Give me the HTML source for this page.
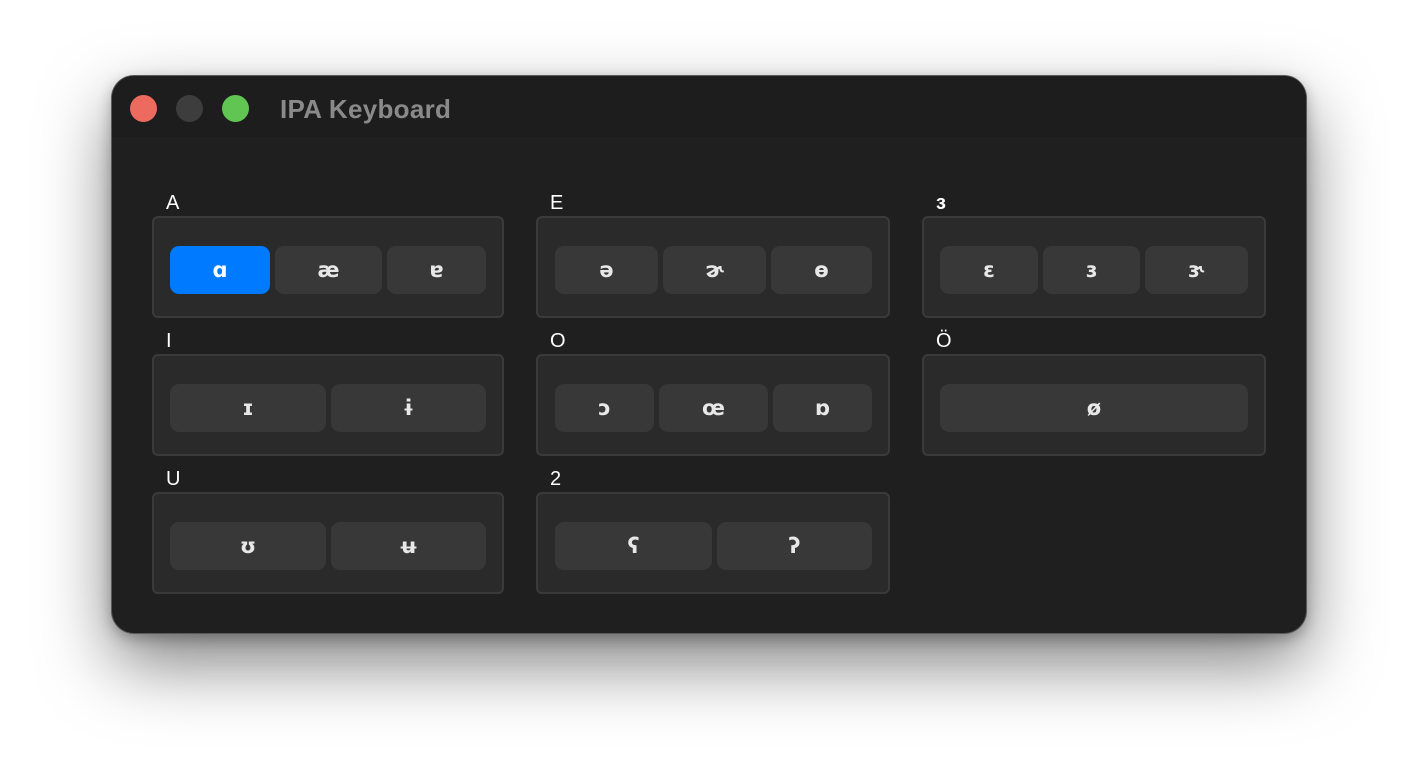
<!DOCTYPE html>
<html><head><meta charset="utf-8"><style>
body{margin:0;width:1418px;height:782px;background:#fff;position:relative;overflow:hidden;font-family:"Liberation Sans","DejaVu Sans",sans-serif}
.win{position:absolute;left:112px;top:76px;width:1194px;height:557px;border-radius:22px;background:#1f1f1f;box-shadow:0 0 0 1px #5a5a5a,0 30px 70px rgba(0,0,0,0.5),0 5px 15px rgba(0,0,0,0.3);overflow:hidden}
.tb{position:absolute;left:0;top:0;right:0;height:62px;background:#1d1d1d;border-bottom:1px solid #232323}
.dot{position:absolute;top:19px;width:27px;height:27px;border-radius:50%}
.title{position:absolute;left:168px;top:18px;font-size:26px;font-weight:bold;color:#8a8a8a;letter-spacing:0.3px}
.lbl{position:absolute;font-size:20px;color:#fff}
.g{position:absolute;background:#2a2a2a;border:2px solid #3a3a3a;border-radius:6px;box-sizing:border-box;height:102px}
.b{position:absolute;height:48px;background:#383838;border-radius:9px;color:#e8e8e8;font-size:21px;font-weight:bold;display:flex;align-items:center;justify-content:center;font-family:"DejaVu Sans",sans-serif}
.sel{background:#007aff;color:#fff}
</style></head><body>
<div class="win">
<div class="tb"></div>
<div class="dot" style="left:18px;background:#ed6a5e"></div>
<div class="dot" style="left:64px;background:#3d3d3d"></div>
<div class="dot" style="left:110px;background:#61c554"></div>
<div class="title">IPA Keyboard</div>
</div>
<div class="lbl" style="left:166px;top:192px">A</div>
<div class="lbl" style="left:550px;top:192px">E</div>
<div class="lbl" style="left:936px;top:192px;font-weight:bold">ɜ</div>
<div class="lbl" style="left:166px;top:330px">I</div>
<div class="lbl" style="left:550px;top:330px">O</div>
<div class="lbl" style="left:936px;top:330px">Ö</div>
<div class="lbl" style="left:166px;top:468px">U</div>
<div class="lbl" style="left:550px;top:468px">2</div>

<div class="g" style="left:152px;top:216px;width:352px"></div>
<div class="g" style="left:536px;top:216px;width:354px"></div>
<div class="g" style="left:922px;top:216px;width:344px"></div>
<div class="g" style="left:152px;top:354px;width:352px"></div>
<div class="g" style="left:536px;top:354px;width:354px"></div>
<div class="g" style="left:922px;top:354px;width:344px"></div>
<div class="g" style="left:152px;top:492px;width:352px"></div>
<div class="g" style="left:536px;top:492px;width:354px"></div>

<div class="b sel" style="left:170px;top:246px;width:100px">ɑ</div>
<div class="b" style="left:275px;top:246px;width:107px">æ</div>
<div class="b" style="left:387px;top:246px;width:99px">ɐ</div>
<div class="b" style="left:555px;top:246px;width:103px">ə</div>
<div class="b" style="left:663px;top:246px;width:103px">ɚ</div>
<div class="b" style="left:771px;top:246px;width:101px">ɵ</div>
<div class="b" style="left:940px;top:246px;width:98px">ɛ</div>
<div class="b" style="left:1043px;top:246px;width:97px">ɜ</div>
<div class="b" style="left:1145px;top:246px;width:103px">ɝ</div>

<div class="b" style="left:170px;top:384px;width:156px">ɪ</div>
<div class="b" style="left:331px;top:384px;width:155px">ɨ</div>
<div class="b" style="left:555px;top:384px;width:99px">ɔ</div>
<div class="b" style="left:659px;top:384px;width:109px">œ</div>
<div class="b" style="left:773px;top:384px;width:99px">ɒ</div>
<div class="b" style="left:940px;top:384px;width:308px">ø</div>

<div class="b" style="left:170px;top:522px;width:156px">ʊ</div>
<div class="b" style="left:331px;top:522px;width:155px">ʉ</div>
<div class="b" style="left:555px;top:522px;width:157px">ʕ</div>
<div class="b" style="left:717px;top:522px;width:155px">ʔ</div>
</body></html>
